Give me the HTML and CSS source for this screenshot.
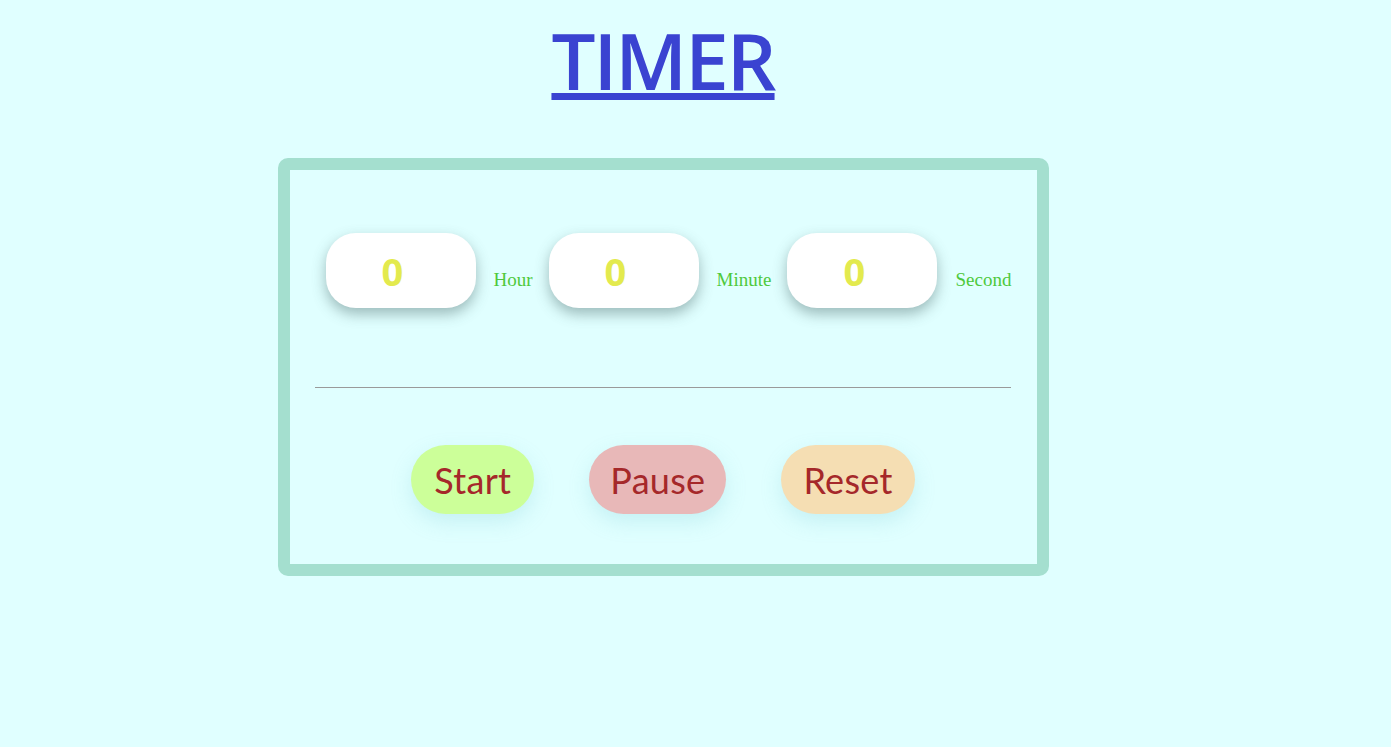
FILE: index.html
```html
<!DOCTYPE html>
<html lang="en">
<head>
<meta charset="utf-8">
<title>Timer</title>
<link rel="stylesheet" href="styles.css">
</head>
<body>
<div class="page">
  <h1 class="title">TIMER</h1>
  <div class="card">
    <div class="fields">
      <input class="field" type="text" value="0" readonly>
      <span class="unit">Hour</span>
      <input class="field" type="text" value="0" readonly>
      <span class="unit">Minute</span>
      <input class="field" type="text" value="0" readonly>
      <span class="unit">Second</span>
    </div>
    <hr class="divider">
    <div class="actions">
      <button class="btn btn-start">Start</button>
      <button class="btn btn-pause">Pause</button>
      <button class="btn btn-reset">Reset</button>
    </div>
  </div>
</div>
</body>
</html>
```
FILE: styles.css
```css
html, body {
  margin: 0;
  padding: 0;
  background: #e0ffff;
}
body {
  padding: 8px;
}
.page {
  width: 1310px;
  display: flex;
  flex-direction: column;
  align-items: center;
}
.title {
  margin: 0;
  padding-top: 4px;
  font-family: "Open Sans", sans-serif;
  font-weight: 600;
  font-size: 78px;
  line-height: 96px;
  color: #3a43d1;
  text-decoration: underline;
  text-decoration-thickness: 7px;
  text-underline-offset: 3px;
  letter-spacing: -2px;
}
.card {
  margin-top: 50px;
  width: 747px;
  border: 12px solid #a4dfcf;
  border-radius: 10px;
  box-sizing: content-box;
  padding: 63px 0 50px;
}
.fields {
  display: flex;
  align-items: baseline;
  padding-left: 36px;
}
.field {
  width: 150px;
  height: 75px;
  box-sizing: border-box;
  border: none;
  outline: none;
  border-radius: 30px;
  background: #fff;
  padding: 0 0 0 56px;
  font-family: "Open Sans", sans-serif;
  font-weight: 700;
  font-size: 38px;
  color: #e3ea4e;
  box-shadow: 0 6px 14px rgba(60, 90, 90, 0.42);
}
.unit {
  margin: 0 16px 0 18px;
  font-family: "Liberation Serif", serif;
  font-size: 19px;
  color: #4ec93c;
}
.divider {
  margin: 79px 26px 0 25px;
  border: none;
  border-top: 1px solid #9a9a9a;
  height: 0;
}
.actions {
  margin-top: 57px;
  display: flex;
  justify-content: center;
  gap: 55px;
}
.btn {
  height: 69px;
  padding: 0 23px;
  border: none;
  border-radius: 35px;
  font-family: "Lato", sans-serif;
  font-size: 36px;
  letter-spacing: 0.3px;
  color: #a5282a;
  box-shadow: 0 8px 20px rgba(120, 200, 210, 0.25);
  cursor: pointer;
}
.btn-start { background: #ccff99; }
.btn-pause { background: #e8b8b8; padding: 0 21px; }
.btn-reset { background: #f5deb3; padding: 0 22px; }
```
